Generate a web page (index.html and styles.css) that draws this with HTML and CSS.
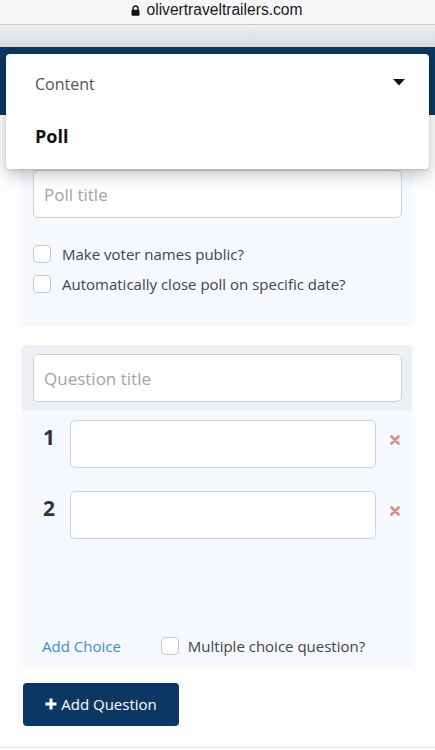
FILE: index.html
```html
<!DOCTYPE html>
<html>
<head>
<meta charset="utf-8">
<link rel="stylesheet" href="styles.css">
</head>
<body>
<div class="urlbar">
  <svg class="lock" width="9" height="11" viewBox="0 0 9 11"><path d="M2 5V3.5a2.5 2.5 0 0 1 5 0V5" fill="none" stroke="#111" stroke-width="1.4"/><rect x="0.5" y="4.8" width="8" height="6" rx="1" fill="#111"/></svg>
  <span>olivertraveltrailers.com</span>
</div>
<div class="toolbar"></div>
<header class="header">
  <div class="dropdown">
    <div class="dd-row dd-head">
      <span>Content</span>
      <svg width="12" height="7" viewBox="0 0 12 7"><path d="M0 0h12L6 6.5z" fill="#111"/></svg>
    </div>
    <div class="dd-row dd-item">Poll</div>
  </div>
</header>
<main class="main">
  <section class="card poll-card">
    <div class="field">Poll title</div>
    <div class="checks">
      <label class="check"><span class="box"></span>Make voter names public?</label>
      <label class="check"><span class="box"></span>Automatically close poll on specific date?</label>
    </div>
  </section>

  <section class="card question-card">
    <div class="q-head">
      <div class="field">Question title</div>
    </div>
    <div class="choices">
      <div class="choice">
        <span class="num">1</span>
        <div class="field choice-field"></div>
        <svg class="x" width="10" height="10" viewBox="0 0 10 10"><path d="M1.5 1.5l7 7M8.5 1.5l-7 7" stroke="#d98a8c" stroke-width="2.6" stroke-linecap="round"/></svg>
      </div>
      <div class="choice">
        <span class="num">2</span>
        <div class="field choice-field"></div>
        <svg class="x" width="10" height="10" viewBox="0 0 10 10"><path d="M1.5 1.5l7 7M8.5 1.5l-7 7" stroke="#d98a8c" stroke-width="2.6" stroke-linecap="round"/></svg>
      </div>
    </div>
    <div class="q-foot">
      <span class="add-choice">Add Choice</span>
      <label class="check"><span class="box"></span>Multiple choice question?</label>
    </div>
  </section>

  <button class="btn">
    <svg width="12" height="12" viewBox="0 0 12 12"><path d="M6 0.5v11M0.5 6h11" stroke="#fff" stroke-width="3"/></svg>
    Add Question
  </button>
</main>
<div class="bottom-line"></div>
</body>
</html>
```

FILE: styles.css
```css
* { box-sizing: border-box; }
html, body { margin: 0; padding: 0; }
body {
  width: 435px;
  height: 750px;
  overflow: hidden;
  background: #fdfdfd;
  font-family: "Open Sans", "Liberation Sans", sans-serif;
  color: #444;
}
.urlbar {
  height: 25px;
  background: #f6f6f6;
  border-bottom: 1px solid #c8c8c8;
  display: flex;
  align-items: center;
  justify-content: center;
  gap: 7px;
  font-family: "Liberation Sans", Arial, sans-serif;
  font-size: 15.6px;
  color: #1a1a1a;
  padding-bottom: 5px;
  padding-right: 2px;
}
.lock { margin-top: 1px; }
.toolbar {
  height: 22px;
  background: linear-gradient(#eeeff1, #d8dadd);
}
.header {
  position: relative;
  height: 68px;
  background: #0b3862;
}
.dropdown {
  position: absolute;
  left: 6px;
  top: 7px;
  width: 423px;
  height: 115px;
  background: #fff;
  border-radius: 4px;
  box-shadow: 0 6px 16px rgba(0,0,0,0.22), 0 1px 3px rgba(0,0,0,0.12);
  z-index: 5;
  padding: 0 24px 0 29px;
}
.dd-row { display: flex; align-items: center; justify-content: space-between; }
.dd-head {
  height: 60px;
  padding-top: 0;
  font-size: 16px;
  color: #555;
}
.dd-head svg { margin-top: -4px; }
.dd-item {
  height: 30px;
  font-size: 18px;
  font-weight: 700;
  color: #111;
  margin-top: 7px;
}
.main {
  padding: 45px 23px 0 22px;
}
.card {
  background: #f5f8fc;
  border-radius: 3px;
  box-shadow: 0 1px 3px rgba(0,0,0,0.05);
}
.field {
  height: 48px;
  background: #fff;
  border: 1px solid #cfd3d8;
  border-radius: 5px;
  display: flex;
  align-items: center;
  padding-left: 10px;
  font-size: 17px;
  color: #a3a3a3;
}
.poll-card {
  padding: 10px 10px 0 11px;
  height: 164px;
}
.checks {
  padding-top: 27px;
  display: flex;
  flex-direction: column;
  gap: 12px;
}
.check {
  display: flex;
  align-items: center;
  gap: 11px;
  font-size: 15px;
  color: #444;
  height: 18px;
}
.box {
  width: 18px;
  height: 18px;
  border: 1px solid #c4c7cc;
  border-radius: 4px;
  background: #fff;
  flex: none;
}
.question-card {
  margin-top: 21px;
  height: 320px;
  display: flex;
  flex-direction: column;
}
.q-head {
  background: #edf1f6;
  padding: 9px 10px 9px 11px;
  border-radius: 3px 3px 0 0;
}
.choices {
  height: 218px;
  padding-top: 9px;
  display: flex;
  flex-direction: column;
  gap: 23px;
}
.choice {
  display: flex;
  align-items: flex-start;
}
.num {
  width: 48px;
  padding-left: 21px;
  font-size: 21px;
  font-weight: 700;
  color: #333;
  line-height: 28px;
  margin-top: 3px;
}
.choice-field { width: 306px; }
.x { margin: 15px 0 0 14px; }
.q-foot {
  flex: 1;
  display: flex;
  align-items: center;
  padding: 0 0 2px 20px;
  gap: 40px;
}
.add-choice {
  font-size: 15px;
  color: #3b8fcf;
}
.q-foot .check { gap: 9px; }
.btn {
  margin-top: 18px;
  margin-left: 1px;
  width: 156px;
  height: 43px;
  background: #0b3862;
  border: none;
  border-radius: 4px;
  color: #fff;
  font-family: "Open Sans", "Liberation Sans", sans-serif;
  font-size: 15px;
  display: flex;
  align-items: center;
  justify-content: center;
  gap: 4px;
  padding: 0 0 1px 0;
}
.bottom-line {
  margin-top: 21px;
  border-top: 1px solid #e6e6e6;
}
```
